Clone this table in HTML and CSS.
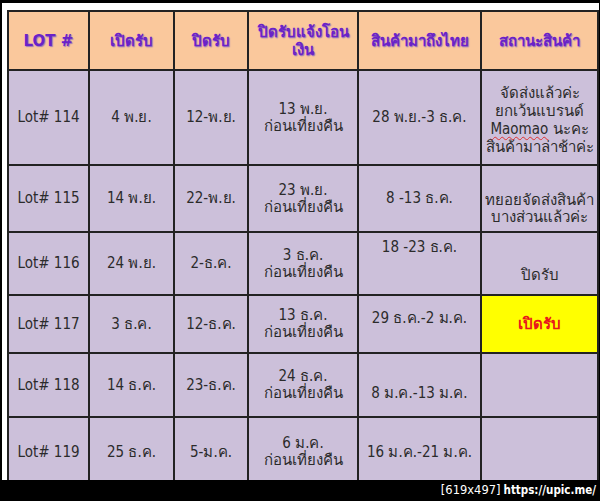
FILE: index.html
```html
<!DOCTYPE html>
<html lang="th">
<head>
<meta charset="utf-8">
<title>Lot schedule</title>
<link rel="stylesheet" href="styles.css">
</head>
<body>
<div class="frame">
<table class="lots">
<colgroup>
<col class="c1"><col class="c2"><col class="c3"><col class="c4"><col class="c5"><col class="c6">
</colgroup>
<tr class="head">
<th>LOT #</th><th>เปิดรับ</th><th>ปิดรับ</th><th>ปิดรับแจ้งโอน<br>เงิน</th><th>สินค้ามาถึงไทย</th><th>สถานะสินค้า</th>
</tr>
<tr class="r1">
<td>Lot# 114</td><td>4 พ.ย.</td><td>12-พ.ย.</td><td>13 พ.ย.<br>ก่อนเที่ยงคืน</td><td>28 พ.ย.-3 ธ.ค.</td><td class="tall">จัดส่งแล้วค่ะ<br>ยกเว้นแบรนด์<br><span class="sp">Maomao</span> นะคะ<br>สินค้ามาล่าช้าค่ะ</td>
</tr>
<tr class="r2">
<td>Lot# 115</td><td>14 พ.ย.</td><td>22-พ.ย.</td><td>23 พ.ย.<br>ก่อนเที่ยงคืน</td><td>8 -13 ธ.ค.</td><td class="down20">ทยอยจัดส่งสินค้า<br>บางส่วนแล้วค่ะ</td>
</tr>
<tr class="r3">
<td>Lot# 116</td><td>24 พ.ย.</td><td>2-ธ.ค.</td><td>3 ธ.ค.<br>ก่อนเที่ยงคืน</td><td class="up32">18 -23 ธ.ค.</td><td class="down24">ปิดรับ</td>
</tr>
<tr class="r4">
<td>Lot# 117</td><td>3 ธ.ค.</td><td>12-ธ.ค.</td><td>13 ธ.ค.<br>ก่อนเที่ยงคืน</td><td class="up12">29 ธ.ค.-2 ม.ค.</td><td class="open">เปิดรับ</td>
</tr>
<tr class="r5">
<td>Lot# 118</td><td>14 ธ.ค.</td><td>23-ธ.ค.</td><td>24 ธ.ค.<br>ก่อนเที่ยงคืน</td><td class="down16">8 ม.ค.-13 ม.ค.</td><td></td>
</tr>
<tr class="r6">
<td>Lot# 119</td><td>25 ธ.ค.</td><td>5-ม.ค.</td><td>6 ม.ค.<br>ก่อนเที่ยงคืน</td><td>16 ม.ค.-21 ม.ค.</td><td></td>
</tr>
</table>
</div>
<div class="footer"><span class="dim">[619x497]</span><span class="url">https://upic.me/</span></div>
</body>
</html>
```

FILE: styles.css
```css
html, body {
  margin: 0;
  padding: 0;
  background: #000;
}
body {
  width: 600px;
  height: 501px;
  overflow: hidden;
}
.frame {
  margin: 3px 0 0 2px;
  width: 597px;
  height: 477px;
  box-sizing: border-box;
  padding: 7px 0 0 5px;
  background: #fff;
  overflow: hidden;
}
.lots {
  border-collapse: collapse;
  table-layout: fixed;
  width: 590px;
  font-family: "DejaVu Sans Condensed", "DejaVu Sans", Tahoma, sans-serif;
  font-size: 15px;
  color: #2b2b2b;
}
.c1 { width: 81px; }
.c2 { width: 85px; }
.c3 { width: 74px; }
.c4 { width: 110px; }
.c5 { width: 123px; }
.c6 { width: 117px; }
.lots th, .lots td {
  border: 2px solid #222;
  text-align: center;
  vertical-align: middle;
  padding: 0;
  line-height: 17px;
  background: #ccc0da;
  overflow: hidden;
}
.lots td.tall { line-height: 18px; padding-top: 4px; }
.lots th {
  background: #fac89c;
  color: #6a22c8;
  font-family: "DejaVu Sans", Tahoma, sans-serif;
  font-weight: bold;
  font-size: 15px;
  line-height: 18px;
  text-shadow: 1px 1px 1px #9a78b8;
}
.head { height: 59px; }
.r1 { height: 95px; }
.r2 { height: 67px; }
.r3 { height: 63px; }
.r4 { height: 58px; }
.r5 { height: 64px; }
.r6 { height: 70px; }
.lots td.open {
  background: #ffff00;
  color: #e8141c;
  font-weight: bold;
}
.down20 { padding-top: 20px !important; }
.down24 { padding-top: 24px !important; }
.down16 { padding-top: 16px !important; }
.up32 { padding-bottom: 32px !important; }
.up12 { padding-bottom: 12px !important; }
.sp {
  text-decoration: underline wavy #e03030;
  text-decoration-thickness: 1px;
  text-underline-offset: 2px;
}
.footer {
  height: 21px;
  text-align: right;
  padding-right: 4px;
  color: #fff;
  font-family: "DejaVu Sans", sans-serif;
  font-size: 11.5px;
  line-height: 21px;
}
.dim { margin-right: 3px; }
.url {
  font-weight: bold;
  font-family: "DejaVu Sans Condensed", sans-serif;
}
```
